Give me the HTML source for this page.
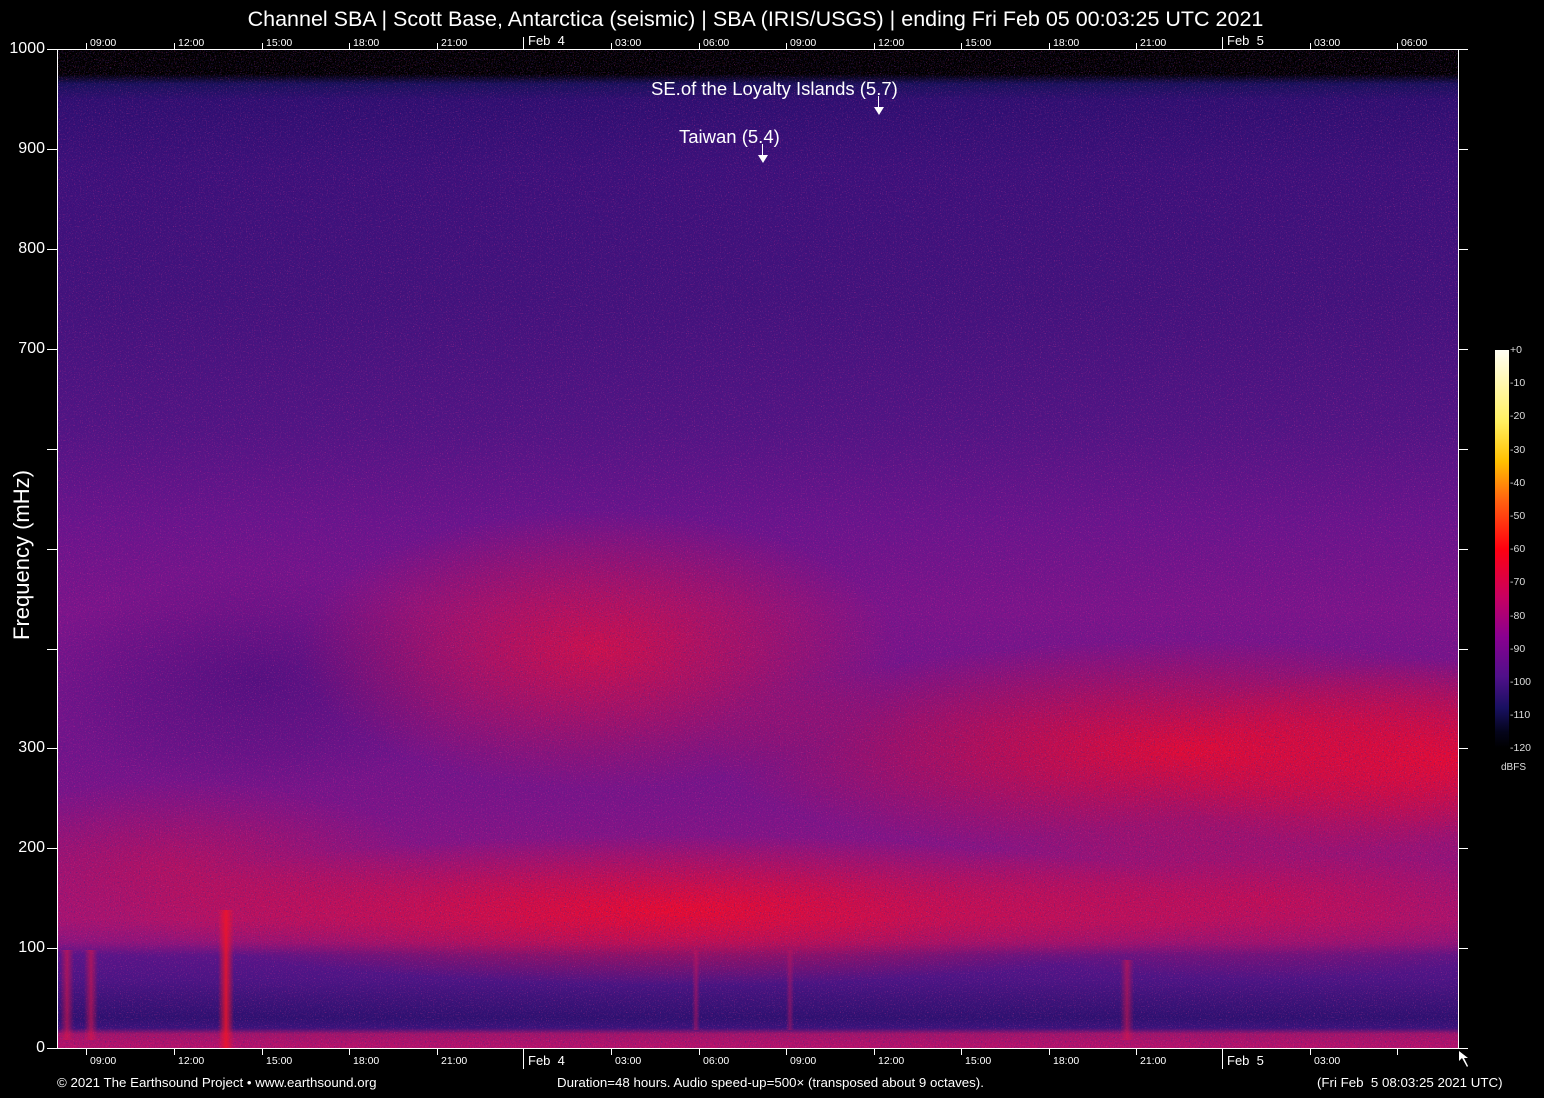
<!DOCTYPE html>
<html><head><meta charset="utf-8"><style>
html,body{margin:0;padding:0;background:#000;}
body{width:1544px;height:1098px;position:relative;overflow:hidden;font-family:"Liberation Sans",sans-serif;color:#fff;}
.abs{position:absolute;}
#plot{left:58px;top:50px;width:1400px;height:998px;overflow:hidden;
background:
radial-gradient(ellipse 300px 140px at 540px 600px, rgba(225,15,60,.8), rgba(225,15,60,0)),
radial-gradient(ellipse 480px 110px at 1130px 700px, rgba(235,10,45,.9), rgba(235,10,45,0)),
radial-gradient(ellipse 300px 100px at 1390px 710px, rgba(240,10,45,.85), rgba(240,10,45,0)),
radial-gradient(ellipse 220px 110px at 200px 630px, rgba(60,12,120,.55), rgba(60,12,120,0)),
radial-gradient(ellipse 560px 75px at 620px 860px, rgba(240,10,40,.9), rgba(240,10,40,0)),
radial-gradient(ellipse 350px 80px at 1200px 850px, rgba(220,10,60,.6), rgba(220,10,60,0)),
radial-gradient(ellipse 250px 90px at 120px 820px, rgba(210,15,70,.55), rgba(210,15,70,0)),
linear-gradient(to bottom,#000 0px,#000 24px,#18105a 34px,#2e0e70 50px,#3c107a 120px,#42127c 250px,#521484 380px,#6a148c 470px,#7c148a 560px,#74148a 640px,#72148a 700px,#7c1488 760px,#8c1482 820px,#a01478 870px,#8a1480 892px,#5a1488 905px,#4c1484 930px,#3c1278 950px,#2e1070 968px,#3a127a 978px,#a0146a 984px,#b8106a 998px);
}
#noise{left:0;top:0;width:1400px;height:998px;}
.t{position:absolute;background:#fff;}
.xl{position:absolute;font-size:11px;}
</style></head><body>
<div class="abs" style="left:0;top:7px;width:1511px;text-align:center;font-size:21.5px;">Channel SBA | Scott Base, Antarctica (seismic) | SBA (IRIS/USGS) | ending Fri Feb 05 00:03:25 UTC 2021</div>

<div id="plot" class="abs">
<svg id="noise" class="abs" width="1400" height="998">
<filter id="f" x="0" y="0" width="100%" height="100%"><feTurbulence type="fractalNoise" baseFrequency="0.8" numOctaves="1" seed="3"/><feColorMatrix values="0 0 0 0 0.05  0 0 0 0 0.02  0 0 0 0 0.25  4 0 0 0 -2.2"/></filter>
<filter id="g" x="0" y="0" width="100%" height="100%"><feTurbulence type="fractalNoise" baseFrequency="0.85" numOctaves="1" seed="11"/><feColorMatrix values="0 0 0 0 0.9  0 0 0 0 0.05  0 0 0 0 0.3  0 4 0 0 -2.3"/></filter>
<rect width="1400" height="998" filter="url(#f)" opacity=".6"/>
<rect width="1400" height="998" filter="url(#g)" opacity=".4"/>
</svg>
<div class="abs" style="left:160px;top:860px;width:16px;height:138px;background:linear-gradient(to right,rgba(240,20,40,0),rgba(240,20,40,.85),rgba(240,20,40,0));"></div>
<div class="abs" style="left:2px;top:900px;width:14px;height:90px;background:linear-gradient(to right,rgba(220,20,70,0),rgba(220,20,70,.6),rgba(220,20,70,0));"></div>
<div class="abs" style="left:26px;top:900px;width:14px;height:90px;background:linear-gradient(to right,rgba(220,20,70,0),rgba(220,20,70,.6),rgba(220,20,70,0));"></div>
<div class="abs" style="left:1062px;top:910px;width:14px;height:80px;background:linear-gradient(to right,rgba(220,20,70,0),rgba(220,20,70,.55),rgba(220,20,70,0));"></div>
<div class="abs" style="left:634px;top:900px;width:8px;height:80px;background:linear-gradient(to right,rgba(200,20,90,0),rgba(200,20,90,.5),rgba(200,20,90,0));"></div>
<div class="abs" style="left:728px;top:900px;width:8px;height:80px;background:linear-gradient(to right,rgba(200,20,90,0),rgba(200,20,90,.45),rgba(200,20,90,0));"></div>
</div>

<!-- axes -->
<div class="t" style="left:57px;top:49px;width:1px;height:1000px;"></div>
<div class="t" style="left:57px;top:49px;width:1411px;height:1px;"></div>
<div class="t" style="left:57px;top:1048px;width:1411px;height:1px;"></div>
<div class="t" style="left:1458px;top:49px;width:1px;height:1000px;"></div>

<div id="yt"></div>
<script>
var ys=[49,149,249,349,449,549,649,748,848,948,1048];
var yl=["1000","900","800","700","","","","300","200","100","0"];
var s="";
for(var i=0;i<ys.length;i++){
 s+='<div class="t" style="left:47px;top:'+ys[i]+'px;width:10px;height:1px"></div>';
 if(i>0&&i<10) s+='<div class="t" style="left:1458px;top:'+ys[i]+'px;width:10px;height:1px"></div>';
 if(yl[i]) s+='<div class="abs" style="left:0;top:'+(ys[i]-9)+'px;width:45px;text-align:right;font-size:16px">'+yl[i]+'</div>';
}
document.getElementById('yt').innerHTML=s;
</script>
<div class="abs" style="left:22px;top:555px;font-size:22px;transform:translate(-50%,-50%) rotate(-90deg);transform-origin:center;white-space:nowrap">Frequency (mHz)</div>

<div id="xt"></div>
<script>
var xs=[86,174,262,349,437,523,611,699,786,874,961,1049,1136,1222,1310,1397];
var lb=["09:00","12:00","15:00","18:00","21:00","Feb  4","03:00","06:00","09:00","12:00","15:00","18:00","21:00","Feb  5","03:00","06:00"];
var h="";
for(var i=0;i<xs.length;i++){
 var big=(i==5||i==13);
 h+='<div class="t" style="left:'+xs[i]+'px;top:'+(big?37:43)+'px;width:1px;height:'+(big?12:6)+'px"></div>';
 h+='<div class="t" style="left:'+xs[i]+'px;top:1049px;width:1px;height:'+(big?20:6)+'px"></div>';
 var fs=big?13:10.5;
 h+='<div class="xl" style="left:'+(xs[i]+(big?5:4))+'px;top:'+(big?33:37)+'px;font-size:'+fs+'px;white-space:pre">'+lb[i]+'</div>';
 if(i<15) h+='<div class="xl" style="left:'+(xs[i]+(big?5:4))+'px;top:'+(big?1053:1055)+'px;font-size:'+fs+'px;white-space:pre">'+lb[i]+'</div>';
}
document.getElementById('xt').innerHTML=h;
</script>

<div class="abs" style="left:651px;top:78px;font-size:18.5px">SE.of the Loyalty Islands (5.7)</div>
<div class="t" style="left:878px;top:96px;width:1px;height:12px"></div>
<div class="abs" style="left:874px;top:107px;width:0;height:0;border-left:5px solid transparent;border-right:5px solid transparent;border-top:8px solid #fff"></div>
<div class="abs" style="left:679px;top:126px;font-size:18.5px">Taiwan (5.4)</div>
<div class="t" style="left:762px;top:144px;width:1px;height:12px"></div>
<div class="abs" style="left:758px;top:155px;width:0;height:0;border-left:5px solid transparent;border-right:5px solid transparent;border-top:8px solid #fff"></div>

<div class="abs" style="left:1495px;top:350px;width:14px;height:398px;background:linear-gradient(to bottom,#fffff4 0%,#fff060 18%,#ffc000 28%,#ff6010 38%,#ff0010 50%,#c80060 62%,#8a0090 72%,#50108a 82%,#181060 90%,#04041a 96%,#000 100%)"></div>
<div id="cb"></div>
<script>
var c="";for(var k=0;k<=12;k++){var y=350+k*33.2;c+='<div class="abs" style="left:1510px;top:'+(y-6)+'px;font-size:10.5px;color:#ddd">'+(k==0?'+0':'-'+(k*10))+'</div>';}
c+='<div class="abs" style="left:1501px;top:762px;font-size:10px;color:#ddd">dBFS</div>';
document.getElementById('cb').innerHTML=c;
</script>

<svg class="abs" style="left:1458px;top:1050px" width="14" height="20"><path d="M1 1 L1 11 L4 8 L9 17 L10 16 L6 8 L10 8 Z" fill="#fff"/></svg>

<div class="abs" style="left:57px;top:1075px;font-size:13.3px">© 2021 The Earthsound Project • www.earthsound.org</div>
<div class="abs" style="left:557px;top:1075px;font-size:13.3px">Duration=48 hours. Audio speed-up=500× (transposed about 9 octaves).</div>
<div class="abs" style="left:1317px;top:1075px;font-size:13.3px;white-space:pre">(Fri Feb  5 08:03:25 2021 UTC)</div>
</body></html>
